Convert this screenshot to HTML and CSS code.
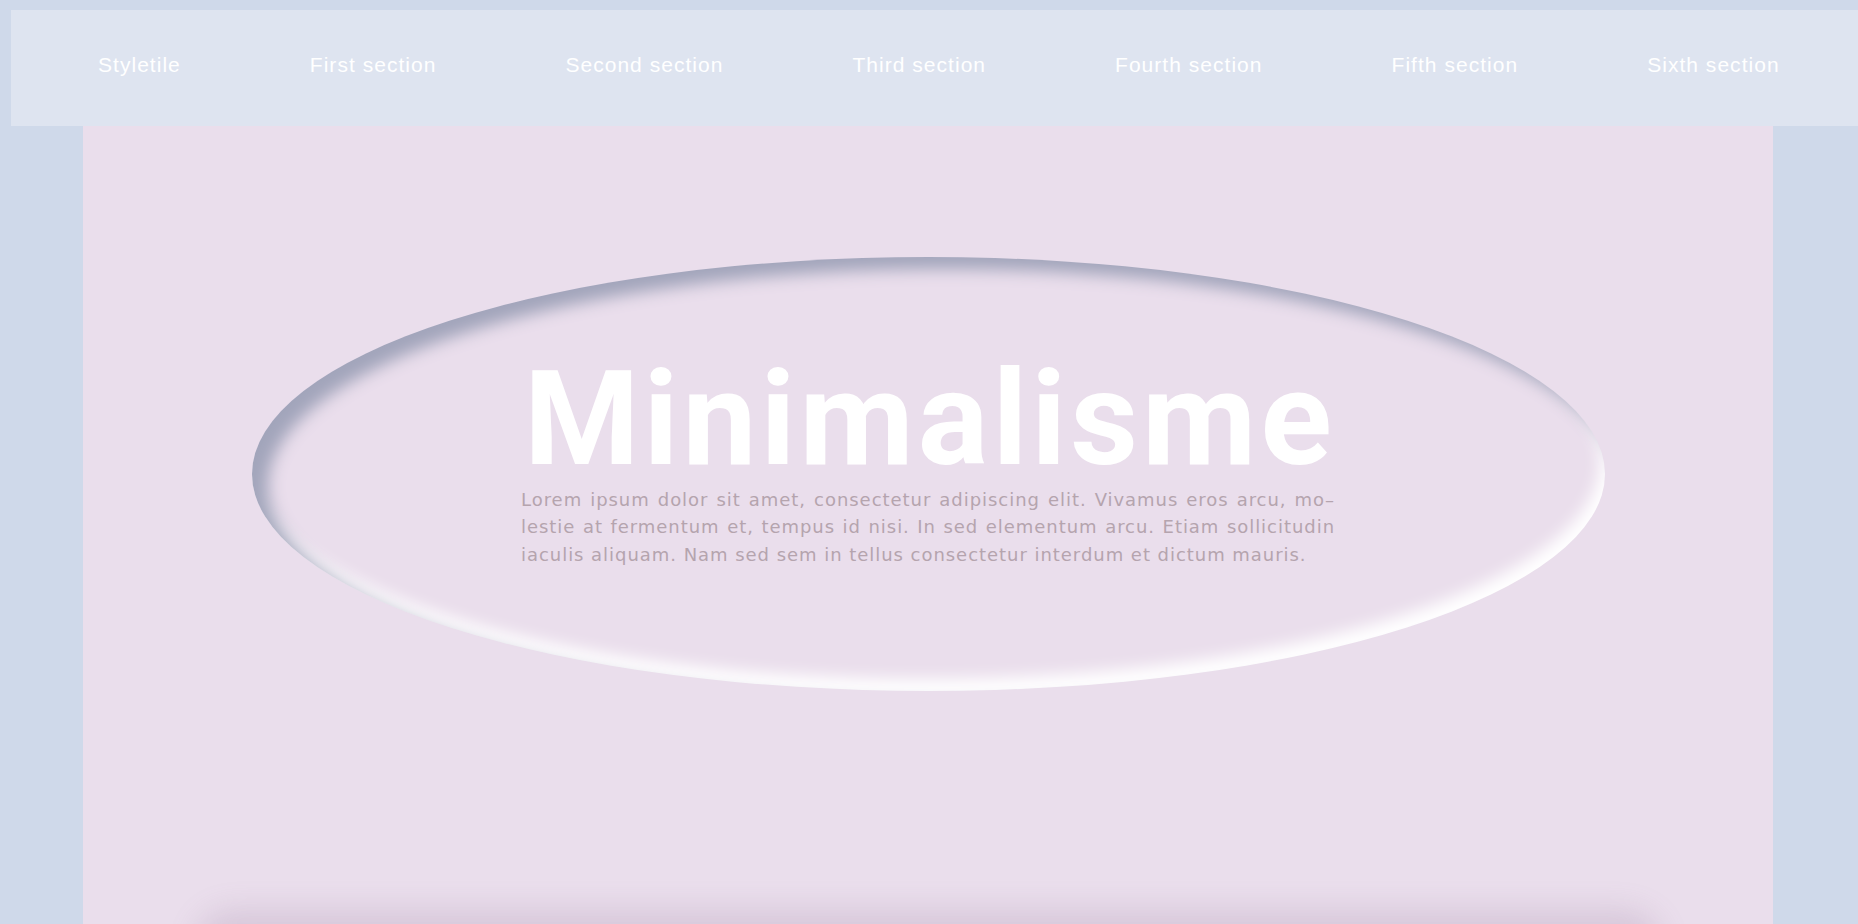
FILE: index.html
```html
<!DOCTYPE html>
<html lang="fr">
<head>
<meta charset="utf-8">
<title>Minimalisme – Styletile</title>
<link rel="stylesheet" href="styles.css">
</head>
<body>
<nav class="topnav">
  <a href="#">Styletile</a>
  <a href="#">First section</a>
  <a href="#">Second section</a>
  <a href="#">Third section</a>
  <a href="#">Fourth section</a>
  <a href="#">Fifth section</a>
  <a href="#">Sixth section</a>
</nav>
<main class="page">
  <section class="oval">
    <div class="hero-text">
      <h1 class="title">Minimalisme</h1>
      <p class="lead">
        <span class="line">Lorem ipsum dolor sit amet, consectetur adipiscing elit. Vivamus eros arcu, mo–</span>
        <span class="line">lestie at fermentum et, tempus id nisi. In sed elementum arcu. Etiam sollicitudin</span>
        <span class="line last">iaculis aliquam. Nam sed sem in tellus consectetur interdum et dictum mauris.</span>
      </p>
    </div>
  </section>
  <section class="panel"></section>
</main>
</body>
</html>
```

FILE: styles.css
```css
* { box-sizing: border-box; }

html, body {
  margin: 0;
  height: 100%;
}

body {
  background: #cfd9ea;
  padding-top: 10px;
  font-family: "Liberation Sans", Arial, sans-serif;
}

.topnav {
  margin-left: 11px;
  height: 116px;
  background: #dee4f0;
  display: flex;
  align-items: center;
  gap: 129px;
  padding: 0 0 6px 87px;
  white-space: nowrap;
}

.topnav a {
  color: #ffffff;
  text-decoration: none;
  font-size: 21px;
  letter-spacing: 1.03px;
}

.page {
  margin-left: 83px;
  width: 1690px;
  height: calc(100% - 116px);
  background: #eadeec;
  overflow: hidden;
  display: flex;
  flex-direction: column;
  align-items: center;
}

.oval {
  flex-shrink: 0;
  margin-top: 131px;
  width: 1353px;
  height: 434px;
  border-radius: 50%;
  box-shadow: inset 16px 12px 16px #a2a5bb, inset -5px -12px 16px #ffffff;
  display: flex;
  flex-direction: column;
  align-items: center;
  padding-top: 96px;
}

.hero-text {
  width: 814px;
}

.title {
  margin: 0 0 0 3px;
  font-family: Roboto, "Liberation Sans", sans-serif;
  font-weight: 700;
  font-size: 132px;
  line-height: 132px;
  color: #ffffff;
  letter-spacing: 4px;
}

.lead {
  margin: 1px 0 0;
  font-family: "DejaVu Sans", Verdana, sans-serif;
  font-size: 18px;
  line-height: 27.3px;
  letter-spacing: 0.96px;
  color: #b5a4ae;
}

.lead .line {
  display: block;
  white-space: nowrap;
  text-align: justify;
  text-align-last: justify;
}

.lead .line.last {
  text-align-last: left;
}

.panel {
  flex-shrink: 0;
  margin-top: 239px;
  width: 1465px;
  height: 300px;
  border-radius: 36px;
  box-shadow: 0 -20px 30px rgba(140, 110, 145, 0.2);
}
```
